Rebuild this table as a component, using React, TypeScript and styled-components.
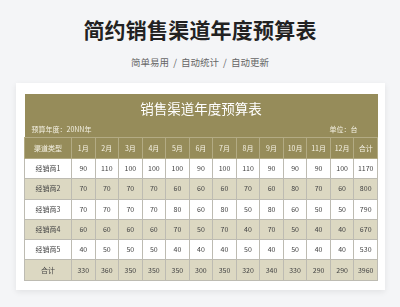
import React from "react";
import styled, { createGlobalStyle } from "styled-components";

const GlobalStyle = createGlobalStyle`
  html, body {
    margin: 0;
    padding: 0;
    background: #f4f5f7;
    font-family: "Noto Sans CJK SC", "Noto Sans", sans-serif;
  }
`;

const SPage = styled.div`
  width: 400px;
  height: 307px;
  overflow: hidden;
  display: flex;
  flex-direction: column;
  align-items: center;
`;

const STitle = styled.h1`
  margin: 15px 0 0 0;
  font-size: 21px;
  line-height: 28px;
  font-weight: 700;
  color: #222;
  letter-spacing: 0.2px;
`;

const SSub = styled.p`
  margin: 13px 0 0 0;
  font-size: 9.5px;
  line-height: 12px;
  color: #666;
  word-spacing: 2px;
`;

const SCard = styled.section`
  margin-top: 15px;
  width: 369px;
  height: 207px;
  box-sizing: border-box;
  background: #fff;
  box-shadow: 0 2px 6px rgba(0, 0, 0, 0.08);
  padding: 11px 7px 0 8px;
`;

const STable = styled.table`
  width: 354px;
  border-collapse: collapse;
  table-layout: fixed;
  font-size: 7px;
  line-height: 1;
  color: #444;
  text-align: center;
  will-change: transform;
`;

const SCaption = styled.td`
  background: #968c5a;
  color: #fff;
  font-size: 13.5px;
  line-height: 14px;
  height: 28px;
  padding: 0;
  vertical-align: middle;
`;

const SInfo = styled.td<{ $align: "left" | "right" }>`
  background: #968c5a;
  color: #f3f0e2;
  font-size: 7px;
  height: 15px;
  padding: ${(p) => (p.$align === "left" ? "0 0 0 7px" : "0 20px 0 0")};
  text-align: ${(p) => p.$align};
`;

const SHead = styled.th`
  background: #968c5a;
  color: #f6f3e6;
  font-weight: 400;
  height: 20px;
  padding: 0;
  border: 1px solid #b3ab84;
`;

const SRow = styled.tr<{ $shade: boolean }>`
  background: ${(p) => (p.$shade ? "#dcd8c2" : "#fff")};
`;

const SCell = styled.td`
  height: 19.3px;
  padding: 0;
  border: 1px solid #bdbbb2;
`;

const months = ["1月", "2月", "3月", "4月", "5月", "6月", "7月", "8月", "9月", "10月", "11月", "12月"];

const rows: [string, number[]][] = [
  ["经销商1", [90, 110, 100, 100, 100, 90, 100, 110, 90, 90, 90, 100, 1170]],
  ["经销商2", [70, 70, 70, 70, 60, 60, 60, 70, 60, 80, 70, 60, 800]],
  ["经销商3", [70, 70, 70, 70, 80, 60, 80, 50, 80, 60, 50, 50, 790]],
  ["经销商4", [60, 60, 60, 60, 70, 50, 70, 40, 70, 50, 40, 40, 670]],
  ["经销商5", [40, 50, 50, 50, 40, 40, 40, 50, 40, 50, 40, 40, 530]],
  ["合计", [330, 360, 350, 350, 350, 300, 350, 320, 340, 330, 290, 290, 3960]],
];

export default function App() {
  return (
    <SPage>
      <GlobalStyle />
      <STitle>简约销售渠道年度预算表</STitle>
      <SSub>简单易用 / 自动统计 / 自动更新</SSub>
      <SCard>
        <STable>
          <colgroup>
            <col style={{ width: 47 }} />
            {months.map((m) => (
              <col key={m} />
            ))}
            <col />
          </colgroup>
          <thead>
            <tr>
              <SCaption colSpan={14}>销售渠道年度预算表</SCaption>
            </tr>
            <tr>
              <SInfo colSpan={7} $align="left">预算年度：20NN年</SInfo>
              <SInfo colSpan={7} $align="right">单位：台</SInfo>
            </tr>
            <tr>
              <SHead>渠道类型</SHead>
              {months.map((m) => (
                <SHead key={m}>{m}</SHead>
              ))}
              <SHead>合计</SHead>
            </tr>
          </thead>
          <tbody>
            {rows.map(([name, vals], i) => (
              <SRow key={name} $shade={i % 2 === 1}>
                <SCell>{name}</SCell>
                {vals.map((v, j) => (
                  <SCell key={j}>{v}</SCell>
                ))}
              </SRow>
            ))}
          </tbody>
        </STable>
      </SCard>
    </SPage>
  );
}
